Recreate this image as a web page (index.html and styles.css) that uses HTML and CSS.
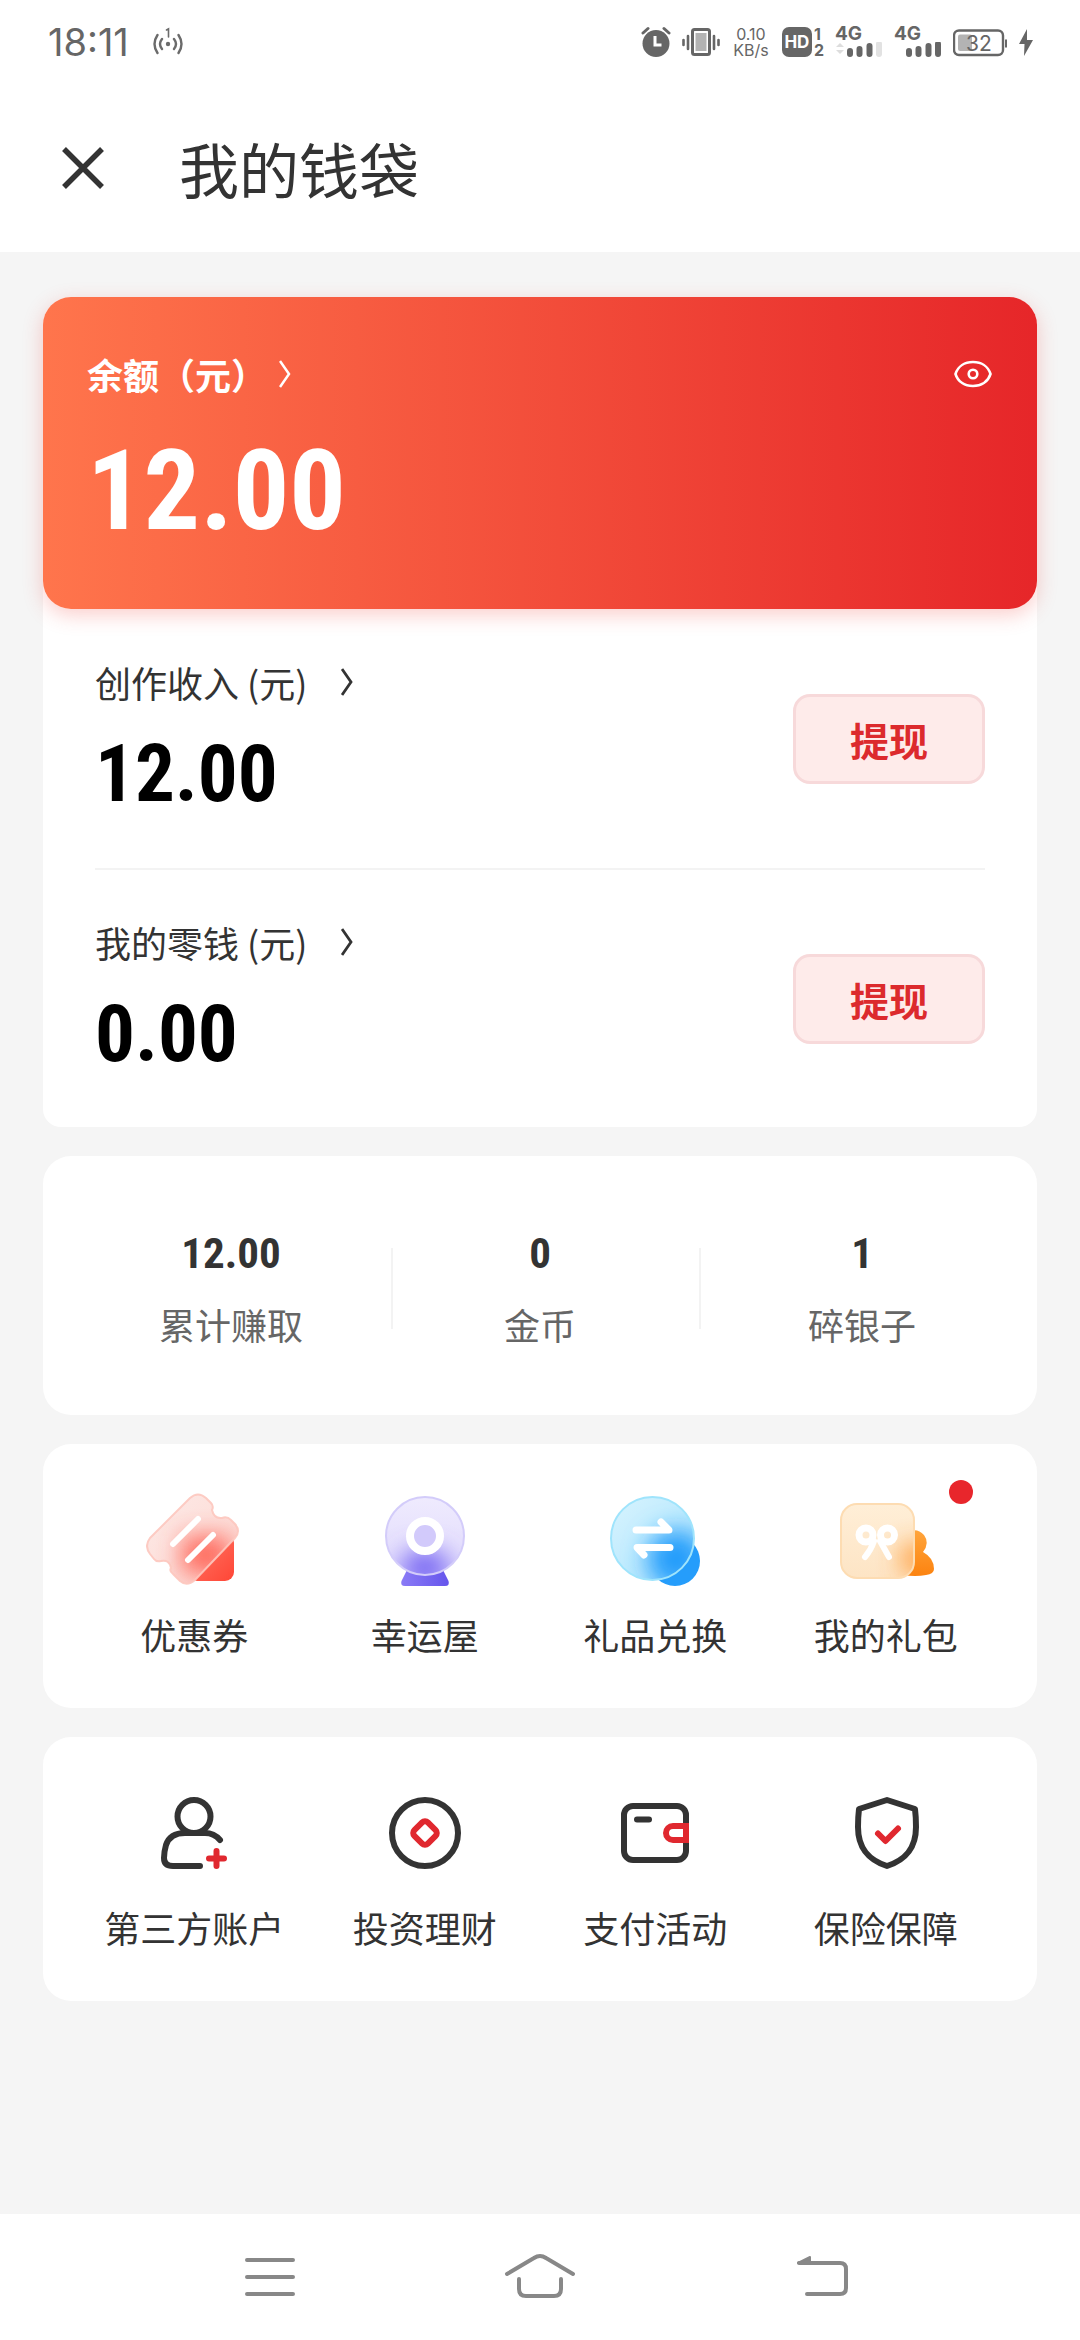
FILE: index.html
```html
<!DOCTYPE html>
<html lang="zh-CN">
<head>
<meta charset="utf-8">
<meta name="viewport" content="width=device-width, initial-scale=1">
<title>我的钱袋</title>
<link rel="stylesheet" href="styles.css">
</head>
<body>
<div class="statusbar">
  <div class="status-left">
    <span class="clock">18:11</span>
    <svg width="30" height="30" viewBox="0 0 30 30" fill="none" stroke="#6b6b6b" stroke-width="2.4" stroke-linecap="round">
      <circle cx="15" cy="17" r="2.2" fill="#6b6b6b" stroke="none"/>
      <path d="M9 12q-4 5 0 10M21 12q4 5 0 10M4.500 8q-6 9 0 18M25.500 8q6 9 0 18"/>
      <path d="M13.500 3l2-1.200V10" stroke-width="1.6"/>
    </svg>
  </div>
  <div class="status-right">
    <svg width="30" height="32" viewBox="0 0 30 32"><circle cx="15" cy="17.500" r="13.500" fill="#666"/><path d="M2 7l5-4.500M28 7l-5-4.500" stroke="#666" stroke-width="3" stroke-linecap="round"/><path d="M14 10v9h6.500" fill="none" stroke="#fff" stroke-width="3"/></svg>
    <svg width="38" height="32" viewBox="0 0 38 32"><rect x="10.500" y="3.500" width="17" height="25" rx="2" fill="#fff" stroke="#666" stroke-width="3"/><rect x="13.500" y="7" width="11" height="18" fill="#b3b3b3"/><path d="M1.500 14v5M6 10v13M32 10v13M36.500 14v5" stroke="#666" stroke-width="2.600" stroke-linecap="round"/></svg>
    <div class="speed"><span>0.10</span><span>KB/s</span></div>
    <div class="hd"><span class="hd-box">HD</span><span class="hd-nums"><span>1</span><span>2</span></span></div>
    <div class="signal"><span class="net">4G</span><svg width="48" height="16" viewBox="0 0 48 16"><path d="M1 5l4-4 4 4zM1 8l4 4 4-4z" fill="#ddd"/><path d="M15 9v3M24.500 7v5M34.500 4v8" stroke="#666" stroke-width="6" stroke-linecap="round"/><path d="M44 2v10" stroke="#e2e2e2" stroke-width="6" stroke-linecap="round"/></svg></div>
    <div class="signal"><span class="net">4G</span><svg width="48" height="16" viewBox="0 0 48 16"><path d="M15 9v3M24.500 7v5M34.500 4v8M44 2v10" stroke="#666" stroke-width="6" stroke-linecap="round"/></svg></div>
    <svg width="54" height="32" viewBox="0 0 54 32"><rect x="1" y="4.500" width="49" height="24.500" rx="5" fill="#fff" stroke="#666" stroke-width="2.400"/><rect x="5" y="8.500" width="14" height="16.500" rx="2" fill="#b3b3b3"/><path d="M53 13.500v8" stroke="#666" stroke-width="2"/><text x="13" y="24.500" class="battery">32</text></svg>
    <svg width="16" height="32" viewBox="0 0 16 32"><path d="M9 3L1 18h5.500L6 30l9-16H9z" fill="#666"/></svg>
  </div>
</div>

<header class="titlebar">
  <button class="close" type="button" aria-label="关闭">
    <svg width="44" height="44" viewBox="0 0 44 44"><path d="M3 3l38 38M41 3L3 41" stroke="#333" stroke-width="5.500"/></svg>
  </button>
  <h1>我的钱袋</h1>
</header>

<main class="content">
  <section class="wallet">
    <div class="hero">
      <div class="hero-head">
        <a class="hero-label" href="#balance">余额（元）<svg width="12" height="28" viewBox="0 0 12 28"><path d="M1 1l9 13-9 13" fill="none" stroke="#fff" stroke-width="2.500"/></svg></a>
        <button class="eye" type="button" aria-label="隐藏金额">
          <svg width="40" height="30" viewBox="0 0 40 30" fill="none" stroke="#fff" stroke-width="2.600"><path d="M2.500 15C5 7 12 3 20 3s15 4 17.500 12C35 23 28 27 20 27S5 23 2.500 15z"/><circle cx="20" cy="15" r="4.300"/></svg>
        </button>
      </div>
      <div class="hero-amount">12.00</div>
    </div>
    <div class="accounts">
      <div class="account">
        <div class="account-info">
          <a class="account-label" href="#income">创作收入 (元)<svg width="12" height="28" viewBox="0 0 12 28"><path d="M1 1l9 13-9 13" fill="none" stroke="#333" stroke-width="2.800"/></svg></a>
          <div class="account-amount">12.00</div>
        </div>
        <button class="withdraw" type="button">提现</button>
      </div>
      <div class="account">
        <div class="account-info">
          <a class="account-label" href="#change">我的零钱 (元)<svg width="12" height="28" viewBox="0 0 12 28"><path d="M1 1l9 13-9 13" fill="none" stroke="#333" stroke-width="2.800"/></svg></a>
          <div class="account-amount">0.00</div>
        </div>
        <button class="withdraw" type="button">提现</button>
      </div>
    </div>
  </section>

  <section class="stats">
    <div class="stat"><strong>12.00</strong><span>累计赚取</span></div>
    <i class="rule"></i>
    <div class="stat stat-mid"><strong>0</strong><span>金币</span></div>
    <i class="rule"></i>
    <div class="stat"><strong>1</strong><span>碎银子</span></div>
  </section>

  <nav class="tiles">
    <a class="tile" href="#coupon">
      <svg width="96" height="96" viewBox="0 0 96 96">
        <defs>
          <linearGradient id="c1" x1="0" y1="0" x2="1" y2="1"><stop offset="0" stop-color="#ff7a6a"/><stop offset="1" stop-color="#ff4636"/></linearGradient>
          <linearGradient id="c2" x1="0" y1="0" x2="1" y2="1"><stop offset="0" stop-color="#fdeae7"/><stop offset="1" stop-color="#fcd6d0"/></linearGradient>
          <clipPath id="ticket"><path d="M4 46L44 6Q52-1 60 6L65 11Q68 14 66 18Q68 27 76 26Q81 24 85 28L89 32Q95 39 89 46L49 88Q41 95 34 89L27 82Q23 79 25 76Q23 67 15 69Q10 70 8 67L4 62Q-2 54 4 46z"/></clipPath>
          <filter id="soft" x="-100%" y="-100%" width="300%" height="300%"><feGaussianBlur stdDeviation="12"/></filter>
        </defs>
        <rect x="42" y="42" width="46" height="47" rx="9" fill="url(#c1)"/>
        <g clip-path="url(#ticket)"><rect width="96" height="96" fill="url(#c2)"/><rect x="36" y="44" width="48" height="38" fill="#ff5546" opacity=".85" filter="url(#soft)"/></g>
        <path d="M4 46L44 6Q52-1 60 6L65 11Q68 14 66 18Q68 27 76 26Q81 24 85 28L89 32Q95 39 89 46L49 88Q41 95 34 89L27 82Q23 79 25 76Q23 67 15 69Q10 70 8 67L4 62Q-2 54 4 46z" fill="none" stroke="#fdc6be" stroke-opacity=".9" stroke-width="2"/>
        <path d="M27 52L52 27M42 68L67 43" stroke="#fff" stroke-width="6" stroke-linecap="round"/>
      </svg>
      <span>优惠券</span>
    </a>
    <a class="tile" href="#lucky">
      <svg width="96" height="96" viewBox="0 0 96 96">
        <defs>
          <linearGradient id="l1" x1="0" y1="0" x2="1" y2="0"><stop offset="0" stop-color="#8a7bf6"/><stop offset="1" stop-color="#6655ec"/></linearGradient>
          <linearGradient id="l2" x1="0" y1="0" x2="0" y2="1"><stop offset="0" stop-color="#f0ecfe"/><stop offset="1" stop-color="#ddd6fc"/></linearGradient>
          <clipPath id="ball"><circle cx="48" cy="44" r="39"/></clipPath>
        </defs>
        <path d="M30 78H66L71.500 89Q73 94 68 94H28Q23 94 24.500 89z" fill="url(#l1)"/>
        <g clip-path="url(#ball)"><rect width="96" height="96" fill="url(#l2)"/><ellipse cx="48" cy="76" rx="25" ry="18" fill="#7766f3" filter="url(#soft)"/></g>
        <circle cx="48" cy="44" r="39" fill="none" stroke="#d3ccfa" stroke-width="2"/>
        <circle cx="48" cy="44" r="15" fill="#d2cafb" stroke="#fff" stroke-width="8"/>
      </svg>
      <span>幸运屋</span>
    </a>
    <a class="tile" href="#exchange">
      <svg width="96" height="96" viewBox="0 0 96 96">
        <defs>
          <linearGradient id="e2" x1="0" y1="0" x2="1" y2="1"><stop offset="0" stop-color="#daf4fe"/><stop offset="1" stop-color="#a5e2fe"/></linearGradient>
          <clipPath id="disc"><circle cx="45.500" cy="46.500" r="41.500"/></clipPath>
        </defs>
        <circle cx="68" cy="69" r="25" fill="#259dfb"/>
        <g clip-path="url(#disc)"><rect width="96" height="96" fill="url(#e2)"/><circle cx="69" cy="67" r="29" fill="#209cfb" filter="url(#soft)"/></g>
        <circle cx="45.500" cy="46.500" r="41.500" fill="none" stroke="#9fe4fc" stroke-width="2"/>
        <path d="M29 38H62L54 30M63 55.500H30L37 63" fill="none" stroke="#fff" stroke-width="7" stroke-linecap="round" stroke-linejoin="round"/>
      </svg>
      <span>礼品兑换</span>
    </a>
    <a class="tile" href="#gifts">
      <svg width="96" height="96" viewBox="0 0 96 96">
        <defs>
          <linearGradient id="g1" x1="0" y1="0" x2="0" y2="1"><stop offset="0" stop-color="#ffa53c"/><stop offset="1" stop-color="#fc8310"/></linearGradient>
          <linearGradient id="g2" x1="0" y1="0" x2="0" y2="1"><stop offset="0" stop-color="#fff0da"/><stop offset="1" stop-color="#fde3c2"/></linearGradient>
          <clipPath id="box"><rect x="3" y="12" width="73" height="74" rx="16"/></clipPath>
        </defs>
        <path d="M66 42Q78 34 86 43Q92 51 85 60Q96 66 96 77Q96 82 88 83Q78 85 64 83z" fill="url(#g1)"/>
        <g clip-path="url(#box)"><rect width="96" height="96" fill="url(#g2)"/><rect x="64" y="52" width="30" height="30" fill="#ff9a35" opacity=".9" filter="url(#soft)"/></g>
        <rect x="3" y="12" width="73" height="74" rx="16" fill="none" stroke="#fddcb2" stroke-width="2"/>
        <g fill="none" stroke="#fff" stroke-width="7" stroke-linecap="round" stroke-linejoin="round"><circle cx="28" cy="43" r="7"/><circle cx="49.500" cy="43" r="7"/><path d="M36 49Q33 58 27 65M42 49L51 65" stroke-width="6"/></g>
      </svg>
      <span>我的礼包</span>
      <i class="dot"></i>
    </a>
  </nav>

  <nav class="tiles">
    <a class="tile" href="#accounts">
      <svg width="96" height="96" viewBox="0 0 96 96" fill="none" stroke="#333" stroke-width="6" stroke-linecap="round" stroke-linejoin="round">
        <circle cx="48" cy="31.500" r="16.500"/>
        <path d="M74 55Q68 48 59 48H39Q24 48 20 60Q18 67 18 73Q18 81 27 81H54"/>
        <path d="M63 73.500H78M70.500 66V81" stroke="#e0282f"/>
      </svg>
      <span>第三方账户</span>
    </a>
    <a class="tile" href="#invest">
      <svg width="96" height="96" viewBox="0 0 96 96" fill="none" stroke="#333" stroke-width="6">
        <circle cx="48" cy="48" r="33"/>
        <rect x="38.500" y="38.500" width="19" height="19" rx="4" stroke="#e0282f" transform="rotate(45 48 48)"/>
      </svg>
      <span>投资理财</span>
    </a>
    <a class="tile" href="#pay">
      <svg width="96" height="96" viewBox="0 0 96 96" fill="none" stroke="#333" stroke-width="6">
        <rect x="17" y="21" width="62" height="54" rx="9"/>
        <path d="M30 34.500H42" stroke-linecap="round"/>
        <path d="M79 41H66A7 7 0 0 0 66 55H79z" fill="#fff" stroke="#e0282f"/>
      </svg>
      <span>支付活动</span>
    </a>
    <a class="tile" href="#insurance">
      <svg width="96" height="96" viewBox="0 0 96 96" fill="none" stroke="#333" stroke-width="6" stroke-linecap="round" stroke-linejoin="round">
        <path d="M49 15L77 24Q78 32 78 42C78 64 67 75 49 81C31 75 20 64 20 42Q20 32 21 24z"/>
        <path d="M40 48.500L47.500 56L60 43.500" stroke="#e0282f"/>
      </svg>
      <span>保险保障</span>
    </a>
  </nav>
</main>

<footer class="sysnav">
  <button type="button" aria-label="菜单"><svg width="80" height="60" viewBox="0 0 80 60"><path d="M17 13H63M17 30H63M17 47H63"/></svg></button>
  <button type="button" aria-label="主页"><svg width="80" height="60" viewBox="0 0 80 60"><path d="M7 27L34 11Q40 7 46 11L73 27M19 32V42Q19 49 26 49H54Q61 49 61 42V32"/></svg></button>
  <button type="button" aria-label="返回"><svg width="80" height="60" viewBox="0 0 80 60"><path d="M29 16H70Q76 16 76 22V41Q76 47 70 47H37"/><path d="M28 16L40 10V16z" fill="#888" stroke-width="2"/></svg></button>
</footer>
</body>
</html>
```
FILE: styles.css
```css
* {
  box-sizing: border-box;
}

body {
  margin: 0;
  min-height: 100vh;
  display: flex;
  flex-direction: column;
  background: #f5f5f5;
  color: #333;
  font-family: "Noto Sans CJK SC", sans-serif;
  font-size: 36px;
  line-height: 48px;
}

button {
  margin: 0;
  padding: 0;
  border: 0;
  background: none;
  font: inherit;
  color: inherit;
}

a {
  color: inherit;
  text-decoration: none;
}

svg {
  display: block;
  flex: none;
}

/* status bar */

.statusbar {
  display: flex;
  justify-content: space-between;
  align-items: center;
  height: 84px;
  padding: 0 46px 0 48px;
  background: #fff;
  color: #666;
}

.status-left {
  display: flex;
  align-items: center;
  gap: 24px;
}

.clock {
  font-family: Inter, sans-serif;
  font-size: 38px;
}

.status-right {
  display: flex;
  align-items: center;
  gap: 11px;
}

.speed {
  display: flex;
  flex-direction: column;
  align-items: center;
  width: 40px;
  font-family: Inter, sans-serif;
  font-size: 16px;
  line-height: 16px;
}

.hd {
  display: flex;
  align-items: center;
  gap: 2px;
  font-family: Inter, sans-serif;
  font-weight: 700;
}

.hd-box {
  width: 30px;
  height: 30px;
  border-radius: 7px;
  background: #666;
  color: #fff;
  font-size: 17px;
  line-height: 30px;
  text-align: center;
}

.hd-nums {
  display: flex;
  flex-direction: column;
  font-size: 16px;
  line-height: 16px;
}

.signal {
  display: flex;
  flex-direction: column;
}

.net {
  font-family: Inter, sans-serif;
  font-size: 19px;
  font-weight: 700;
  line-height: 16px;
}

.battery {
  font-family: Inter, sans-serif;
  font-size: 21px;
  fill: #666;
}

/* title bar */

.titlebar {
  display: flex;
  align-items: center;
  gap: 74px;
  height: 168px;
  padding: 0 60px 0 61px;
  background: #fff;
}

.titlebar h1 {
  margin: 0;
  font-size: 60px;
  font-weight: 400;
  line-height: 84px;
}

/* cards */

.content {
  flex: 1;
  display: flex;
  flex-direction: column;
  gap: 29px;
  padding: 45px 43px;
}

.wallet {
  border-radius: 28px 28px 18px 18px;
  background: #fff;
}

.hero {
  height: 312px;
  padding: 53px 44px 0;
  border-radius: 28px;
  background: linear-gradient(90deg, #ff754c, #e62629);
  box-shadow: 0 6px 20px rgba(240, 60, 50, 0.25);
  color: #fff;
}

.hero-head {
  display: flex;
  justify-content: space-between;
  align-items: center;
}

.hero-label,
.account-label {
  display: flex;
  align-items: center;
}

.hero-label {
  gap: 12px;
  font-weight: 700;
}

.hero-amount,
.account-amount,
.stat strong {
  font-family: "Roboto Condensed", Roboto, sans-serif;
  font-weight: 700;
}

.hero-amount {
  margin-top: 33px;
  font-size: 112px;
  line-height: 120px;
}

.accounts {
  padding: 0 52px;
}

.account {
  display: flex;
  justify-content: space-between;
  align-items: center;
  height: 259px;
}

.account + .account {
  border-top: 2px solid #f3f3f3;
}

.account-label {
  gap: 34px;
}

.account-amount {
  margin-top: 23px;
  color: #000;
  font-size: 79px;
  line-height: 90px;
}

.withdraw {
  width: 192px;
  height: 90px;
  border: 3px solid #f7d9da;
  border-radius: 17px;
  background: #feebea;
  color: #dc2a2d;
  font-size: 39px;
  font-weight: 700;
}

.stats {
  display: grid;
  grid-template-columns: 320fr 2px 306fr 2px 322fr;
  align-items: center;
  padding: 73px 14px 67px 28px;
  border-radius: 28px;
  background: #fff;
}

.stat {
  display: flex;
  flex-direction: column;
  align-items: center;
  gap: 23px;
  color: #666;
}

.stat-mid {
  padding-right: 12px;
}

.stat strong {
  color: #333;
  font-size: 43px;
}

.rule {
  height: 81px;
  background: #f3f3f3;
}

.tiles {
  display: grid;
  grid-template-columns: repeat(4, 1fr);
  padding: 48px 36px 50px;
  border-radius: 28px;
  background: #fff;
}

.tile {
  position: relative;
  display: flex;
  flex-direction: column;
  align-items: center;
  gap: 22px;
}

.dot {
  position: absolute;
  top: -12px;
  right: 28px;
  width: 24px;
  height: 24px;
  border-radius: 50%;
  background: #e8262c;
}

/* system navigation */

.sysnav {
  display: grid;
  grid-template-columns: repeat(3, 1fr);
  height: 126px;
  padding: 0 135px;
  background: #fff;
}

.sysnav button {
  display: flex;
  justify-content: center;
  align-items: center;
}

.sysnav svg {
  fill: none;
  stroke: #888;
  stroke-width: 4;
  stroke-linecap: round;
  stroke-linejoin: round;
}
```
